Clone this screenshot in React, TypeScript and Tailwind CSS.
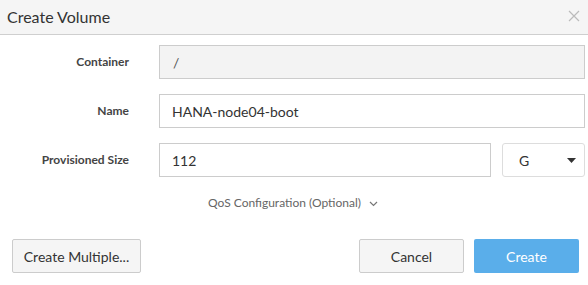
import React from "react";

export default function App() {
  return (
    <div className="w-[588px] h-[285px] bg-white overflow-hidden text-[#333]" style={{ fontFamily: 'Lato, "Open Sans", "Liberation Sans", sans-serif' }}>
      <div className="h-[35px] bg-[#f5f5f5] border-b border-[#cfcfcf] flex items-center justify-between pl-[7px] pr-[8px]">
        <span className="text-[16px] text-[#333] mt-[-1px]">Create Volume</span>
        <svg width="12" height="12" viewBox="0 0 12 12" className="mt-[-2px]">
          <path d="M1 1 L11 11 M11 1 L1 11" stroke="#bbb" strokeWidth="1.2" />
        </svg>
      </div>
      <div className="pt-[10px] pr-[3px]">
        <div className="flex items-center h-[34px]">
          <div className="w-[129px] text-right text-[12px] font-bold text-[#444]">Container</div>
          <div className="ml-[30px] flex-1 h-[34px] border border-[#ccc] bg-[#f3f3f3] flex items-center pl-[13px] text-[14px] text-[#555]">/</div>
        </div>
        <div className="flex items-center h-[34px] mt-[15px]">
          <div className="w-[129px] text-right text-[12px] font-bold text-[#444]">Name</div>
          <div className="ml-[30px] flex-1 h-[34px] border border-[#ccc] bg-white flex items-center pl-[12px] text-[14px] text-[#333]">HANA-node04-boot</div>
        </div>
        <div className="flex items-center h-[34px] mt-[15px]">
          <div className="w-[129px] text-right text-[12px] font-bold text-[#444]">Provisioned Size</div>
          <div className="ml-[30px] w-[332px] h-[34px] border border-[#ccc] bg-white flex items-center pl-[12px] text-[14px] text-[#333]">112</div>
          <div className="ml-[11px] flex-1 h-[34px] border border-[#ddd] rounded-[3px] bg-white flex items-center justify-between pl-[16px] pr-[8px] text-[14px] text-[#333]">
            <span>G</span>
            <svg width="9" height="5" viewBox="0 0 9 5"><path d="M0 0 L9 0 L4.5 5 Z" fill="#333" /></svg>
          </div>
        </div>
      </div>
      <div className="flex items-center justify-center mt-[17px] pr-[2px] text-[12px] text-[#666]">
        <span>QoS Configuration (Optional)</span>
        <svg width="9" height="6" viewBox="0 0 9 6" className="ml-[8px] mt-[1px]"><path d="M1 1 L4.5 4.5 L8 1" stroke="#777" strokeWidth="1.2" fill="none" /></svg>
      </div>
      <div className="flex items-center mt-[27px] px-[12px] pr-[9px]">
        <button className="w-[129px] h-[34px] border border-[#ccc] rounded-[2px] bg-[#f5f5f5] text-[14px] text-[#333]">Create Multiple...</button>
        <div className="flex-1" />
        <button className="w-[105px] h-[34px] border border-[#ccc] rounded-[2px] bg-[#f5f5f5] text-[14px] text-[#333]">Cancel</button>
        <button className="ml-[10px] w-[105px] h-[34px] rounded-[2px] bg-[#5aaeea] text-[14px] text-white">Create</button>
      </div>
    </div>
  );
}
